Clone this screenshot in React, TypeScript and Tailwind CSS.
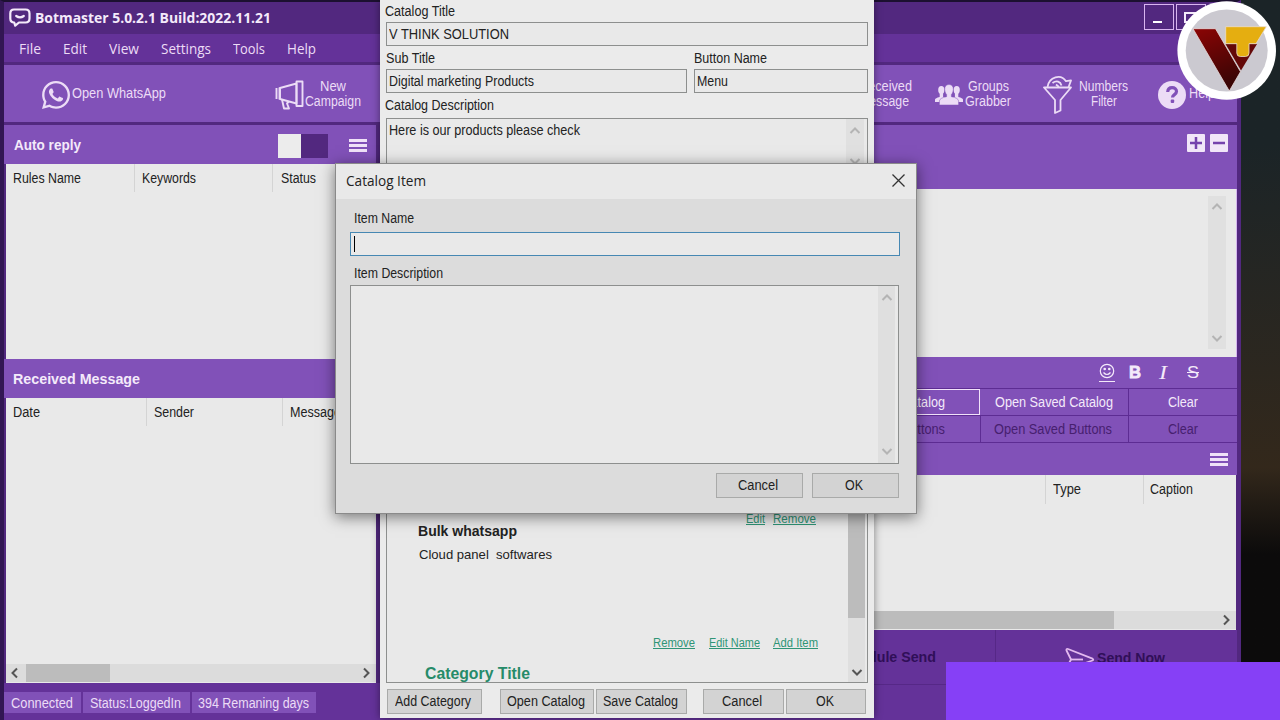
import { useLayoutEffect, useRef, type ReactNode } from "react";
import { FaWhatsapp } from "react-icons/fa";
import clsx from "clsx";

const SANS = "font-['Liberation_Sans',Arial,sans-serif]";
const UI = "font-['Open_Sans','Noto_Sans',sans-serif]";

// Single line label squeezed to an exact width, like the bitmap-ish Windows fonts
function Label({ w, className, children }: { w: number; className?: string; children: ReactNode }) {
  const ref = useRef<HTMLSpanElement>(null);

  useLayoutEffect(() => {
    const el = ref.current;
    if (!el) return;
    el.style.transform = "none";
    el.style.transform = `scaleX(${w / el.getBoundingClientRect().width})`;
  }, [w, children]);

  return (
    <span className={clsx("block shrink-0 whitespace-pre", className)} style={{ width: w }}>
      <span ref={ref} className="inline-block origin-left">
        {children}
      </span>
    </span>
  );
}

function Chevron({ dir, className }: { dir: "up" | "down" | "left" | "right"; className?: string }) {
  const d = {
    up: "M1.5 8 6 3.5 10.5 8",
    down: "M1.5 4 6 8.5 10.5 4",
    left: "M8 1.5 3.5 6 8 10.5",
    right: "M4 1.5 8.5 6 4 10.5",
  }[dir];
  return (
    <svg viewBox="0 0 12 12" className={clsx("size-3 shrink-0", className)} fill="none" stroke="currentColor" strokeWidth={2}>
      <path d={d} />
    </svg>
  );
}

function Burger() {
  return (
    <div className="flex w-[18px] flex-col gap-[2px]">
      <div className="h-[3px] bg-[#f0e2f8]" />
      <div className="h-[3px] bg-[#f0e2f8]" />
      <div className="h-[3px] bg-[#f0e2f8]" />
    </div>
  );
}

function WinButton({ w, label, tw, className }: { w: number; label: string; tw: number; className?: string }) {
  return (
    <button
      className={clsx("flex h-[25px] shrink-0 items-center justify-center border border-[#a9aaa9] bg-[#d3d3d3] pb-px pr-[3px]", className)}
      style={{ width: w }}
    >
      <Label w={tw}>{label}</Label>
    </button>
  );
}

const MENU = [
  { label: "File", w: 22, gap: "ml-[18px]" },
  { label: "Edit", w: 24, gap: "ml-[22px]" },
  { label: "View", w: 30, gap: "ml-[22px]" },
  { label: "Settings", w: 50, gap: "ml-[22px]" },
  { label: "Tools", w: 32, gap: "ml-[22px]" },
  { label: "Help", w: 29, gap: "ml-[22px]" },
];

function TitleBar() {
  return (
    <div className="flex h-8 shrink-0 items-center bg-[#52287f] pl-[5px] text-[#f4eafa]">
      <svg viewBox="0 0 22 20" className="h-5 w-[22px]" fill="none" stroke="currentColor" strokeWidth={2.2} strokeLinejoin="round" strokeLinecap="round">
        <path d="M5 1.5h11.5q4 0 4 4v5q0 4-4 4H10l-3.8 3.2-1-3.2Q1.300 14.200 1.300 10.500v-5q0-4 3.700-4Z" />
        <path d="M7.200 8q3.800 2.700 7.600 0" />
      </svg>
      <Label w={236} className={clsx(UI, "ml-[4px] text-[14px] font-bold")}>
        Botmaster 5.0.2.1 Build:2022.11.21
      </Label>
      <div className="ml-auto flex gap-[2px] self-start pr-[31px] pt-[2px]">
        <div className="flex h-[26px] w-[30px] items-end justify-center border border-[#d9b5f0] pb-[6px] pr-[3px]">
          <div className="h-[2px] w-[9px] bg-white" />
        </div>
        <div className="flex h-[26px] w-[30px] items-center justify-center border border-[#d9b5f0]">
          <div className="h-[11px] w-[14px] border-2 border-[#f4eafa]" />
        </div>
      </div>
    </div>
  );
}

function Megaphone() {
  return (
    <svg viewBox="0 0 29 30" className="h-[30px] w-[29px]" fill="none" stroke="currentColor" strokeWidth={1.900} strokeLinejoin="round">
      <path d="M1.500 8v11M4.500 7.500v12" />
      <path d="M5 8 21.500 3.500v20L5 19Z" />
      <path d="M21.500 1.500h6v24.500h-6Z" />
      <path d="M7 19.500 9 28.500h5l-2-5 1.800-2" />
    </svg>
  );
}

function GroupIcon() {
  return (
    <svg viewBox="0 0 28 22" className="h-[22px] w-[28px]" fill="currentColor">
      <ellipse cx="6.300" cy="6" rx="3.100" ry="4" />
      <ellipse cx="21.700" cy="6" rx="3.100" ry="4" />
      <path d="M4.700 8h3.400v5H11v5H0v-2.500q.3-1.500 4.700-2.500ZM23.300 8h-3.400v5H17v5h11v-2.500q-.3-1.500-4.700-2.500Z" />
      <path stroke="#8151b8" strokeWidth={0.500} d="M14 .5c3 0 4.500 2.300 4.300 5-.2 2.400-1 4-1.900 5v2.200q7 1.300 7.200 4.300v4H4.400v-4q.2-3 7.200-4.300v-2.200c-.9-1-1.700-2.600-1.900-5-.2-2.700 1.300-5 4.300-5Z" />
    </svg>
  );
}

function Funnel() {
  return (
    <svg viewBox="0 0 30 39" className="h-[39px] w-[30px]" fill="none" stroke="currentColor" strokeWidth={1.800} strokeLinejoin="round">
      <path d="M1 12.500h27L17.500 25v10.500L12 38V25Z" />
      <path d="M4.500 12C6 1.500 18-1.500 23 6.200l5-.8-2.500 6.800" />
      <path d="M9.500 8c4-3 8-1.500 9 2.500M13 9.500l3 2.500" />
    </svg>
  );
}

function Toolbar() {
  return (
    <div className="flex h-[57px] shrink-0 items-center bg-[#8151b8] pl-[38px] text-[14px] leading-[15px] text-[#ecdcf6]">
      <FaWhatsapp size={32} className="-ml-[2px] mt-[2px]" />
      <Label w={94} className="ml-0">Open WhatsApp</Label>
      <div className="ml-[109px] mt-[2px]"><Megaphone /></div>
      <div className="ml-px flex w-14 flex-col items-center">
        <Label w={26}>New</Label>
        <Label w={56}>Campaign</Label>
      </div>
      <div className="ml-[489px] flex w-[62px] flex-col items-end">
        <Label w={53}>Received</Label>
        <Label w={50} className="mr-[3px]">Message</Label>
      </div>
      <div className="ml-[23px] mt-[3px]"><GroupIcon /></div>
      <div className="ml-[2px] flex w-[46px] flex-col items-center">
        <Label w={41}>Groups</Label>
        <Label w={46}>Grabber</Label>
      </div>
      <div className="ml-[32px] mt-px"><Funnel /></div>
      <div className="ml-[6px] flex w-[49px] flex-col items-center">
        <Label w={49}>Numbers</Label>
        <Label w={26}>Filter</Label>
      </div>
      <svg viewBox="0 0 28 28" className="ml-[30px] mt-[2px] size-7">
        <circle cx="14" cy="14" r="14" fill="currentColor" />
        <path d="M9.700 11c.2-3 2-4.300 4.400-4.300 2.500 0 4.400 1.400 4.400 3.800 0 3.200-4 3-4 6" fill="none" stroke="#8151b8" strokeWidth={3.200} />
        <rect x="12.700" y="18.500" width="3.500" height="3.500" rx="1" fill="#8151b8" />
      </svg>
      <Label w={26} className="ml-[3px]">Help</Label>
    </div>
  );
}

function LeftColumn() {
  return (
    <div className="flex w-[376px] shrink-0 flex-col">
      <div className="flex h-[39px] w-[372px] shrink-0 items-center bg-[#8151b8] pl-[10px] pr-[9px]">
        <Label w={67} className="text-[14px] font-bold text-[#f4eafa]">Auto reply</Label>
        <div className="ml-auto mt-[2px] flex h-6 w-[50px] bg-[#52287f]">
          <div className="w-[23px] bg-[#ececec]" />
        </div>
        <div className="ml-[21px] mt-[2px]"><Burger /></div>
      </div>
      <div className="ml-[2px] flex h-[195px] w-[370px] bg-[#e9e9e9] text-[#222]">
        <div className="h-[28px] w-[129px] border-r border-[#d4d4d4] pl-[7px] pt-[4px]"><Label w={68}>Rules Name</Label></div>
        <div className="h-[28px] w-[138px] border-r border-[#d4d4d4] pl-[7px] pt-[4px]"><Label w={54}>Keywords</Label></div>
        <div className="pl-[8px] pt-[4px]"><Label w={35}>Status</Label></div>
      </div>
      <div className="flex h-[39px] w-[372px] shrink-0 items-center bg-[#8151b8] pl-[9px]">
        <Label w={127} className="mt-px text-[14px] font-bold text-[#f4eafa]">Received Message</Label>
      </div>
      <div className="ml-[2px] flex h-[285px] w-[370px] flex-col justify-between bg-[#e9e9e9] text-[#222]">
        <div className="flex">
          <div className="h-[28px] w-[141px] border-r border-[#d4d4d4] pl-[7px] pt-[4px]"><Label w={27}>Date</Label></div>
          <div className="h-[28px] w-[136px] border-r border-[#d4d4d4] pl-[7px] pt-[4px]"><Label w={40}>Sender</Label></div>
          <div className="pl-[7px] pt-[4px]"><Label w={51}>Message</Label></div>
        </div>
        <div className="mb-px flex h-[18px] items-center bg-[#dcdcdc] pl-[3px] pr-[4px] text-[#555]">
          <Chevron dir="left" />
          <div className="ml-[5px] h-full w-[84px] bg-[#bcbcbc]" />
          <Chevron dir="right" className="ml-auto" />
        </div>
      </div>
      <div className="flex flex-1 items-start gap-[2px] bg-[#643299] pt-[9px] text-[#ecdcf6]">
        <div className="flex h-[21px] w-[77px] items-center bg-[#8151b8] pl-[7px]"><Label w={62}>Connected</Label></div>
        <div className="flex h-[21px] w-[107px] items-center bg-[#8151b8] pl-[7px]"><Label w={91}>Status:LoggedIn</Label></div>
        <div className="flex h-[21px] w-[124px] items-center bg-[#8151b8] pl-[6px]"><Label w={111}>394 Remaning days</Label></div>
      </div>
    </div>
  );
}

function RightColumn() {
  return (
    <div className="flex w-[857px] shrink-0 flex-col">
      <div className="flex h-[64px] shrink-0 items-start justify-end gap-[5px] bg-[#8151b8] pr-[9px] pt-[9px]">
        <svg viewBox="0 0 18 18" className="size-[18px]"><rect width="18" height="18" rx="1" fill="#f1e6f8" /><path d="M9 3v12M3 9h12" stroke="#7543ad" strokeWidth="2.500" /></svg>
        <svg viewBox="0 0 18 18" className="size-[18px]"><rect width="18" height="18" rx="1" fill="#f1e6f8" /><path d="M3 9h12" stroke="#7543ad" strokeWidth="2.500" /></svg>
      </div>
      <div className="flex h-[168px] justify-end border-r border-[#d5b5ef] bg-[#e9e9e9] pb-[8px] pr-[10px] pt-[7px]">
        <div className="flex w-[18px] flex-col items-center justify-between bg-[#e0e0e0] py-[5px] text-[#b4b4b4]">
          <Chevron dir="up" />
          <Chevron dir="down" />
        </div>
      </div>
      <div className="flex h-[31px] items-center justify-end bg-[#8151b8] pr-[38px] text-[#f4eafa]">
        <div className="border-b border-[#f4eafa] pb-[2px]">
          <svg viewBox="0 0 16 16" className="size-4" fill="none" stroke="currentColor" strokeWidth={1.200}>
            <circle cx="8" cy="8" r="6.700" />
            <path d="M4.500 9.500q3.500 4 7 0" />
            <circle cx="5.700" cy="6" r=".7" fill="currentColor" />
            <circle cx="10.300" cy="6" r=".7" fill="currentColor" />
          </svg>
        </div>
        <Label w={12} className="ml-[14px] text-[17px] font-black [-webkit-text-stroke:0.8px_#f4eafa]">B</Label>
        <Label w={8} className="ml-[18px] font-['Liberation_Serif',serif] text-[19px] italic">I</Label>
        <Label w={12} className="ml-[20px] text-[17px] [&>span]:line-through">S</Label>
      </div>
      <div className="flex flex-col border-y border-[#5d2c93] bg-[#8151b8] text-[#f4eafa]">
        <div className="flex h-[27px] border-b border-[#5d2c93]">
          <div className="flex w-[600px] items-center justify-end border border-[#f1e2fa] pr-[34px]"><Label w={85}>Create Catalog</Label></div>
          <div className="flex w-[149px] items-center justify-center border-r border-[#5d2c93] pr-px"><Label w={118}>Open Saved Catalog</Label></div>
          <div className="flex flex-1 items-center justify-center pr-px"><Label w={30}>Clear</Label></div>
        </div>
        <div className="flex h-[26px] text-[#47206f]">
          <div className="flex w-[601px] items-center justify-end border-r border-[#5d2c93] pr-[35px]"><Label w={85}>Create Buttons</Label></div>
          <div className="flex w-[148px] items-center justify-center border-r border-[#5d2c93] pr-[3px]"><Label w={118}>Open Saved Buttons</Label></div>
          <div className="flex flex-1 items-center justify-center pr-px"><Label w={30}>Clear</Label></div>
        </div>
      </div>
      <div className="flex h-[32px] items-center justify-end bg-[#8151b8] pr-[9px]"><Burger /></div>
      <div className="flex h-[155px] w-[856px] flex-col justify-between bg-[#e9e9e9] text-[#222]">
        <div className="flex justify-end">
          <div className="h-[29px] w-[98px] border-l border-[#d4d4d4] pl-[7px] pt-[4px]"><Label w={28}>Type</Label></div>
          <div className="h-[29px] w-[93px] border-l border-[#d4d4d4] pl-[6px] pt-[4px]"><Label w={43}>Caption</Label></div>
        </div>
        <div className="mb-px flex h-[18px] items-center bg-[#dcdcdc] pr-[4px] text-[#555]">
          <div className="h-full w-[734px] bg-[#bcbcbc]" />
          <Chevron dir="right" className="ml-auto" />
        </div>
      </div>
      <div className="flex h-[55px] bg-[#643299] text-[14px] font-bold text-[#300f58]">
        <div className="flex w-[616px] items-center justify-end border-b border-r border-[#562887] pr-[59px]"><Label w={102}>Schedule Send</Label></div>
        <div className="flex flex-1 items-center border-b border-[#562887] pl-[69px]">
          <svg viewBox="0 0 30 24" className="mt-[4px] h-6 w-[30px]" fill="none" stroke="#e3b9ef" strokeWidth={1.800} strokeLinejoin="round">
            <path d="M3 2q-2-.5-1.500 1.500L6 12.500l-4 7.500q-.5 2.500 2 1.700L27.500 13.500q1.500-1 0-1.800Z" />
            <path d="M6 12.500h12" />
          </svg>
          <Label w={68} className="ml-[2px] mt-px">Send Now</Label>
        </div>
      </div>
      <div className="flex-1 bg-[#643299]" />
    </div>
  );
}

function MainWindow() {
  return (
    <div className="flex h-[720px] w-[1241px] shrink-0 flex-col border-l-4 border-r-4 border-t-2 border-l-[#321653] border-r-[#52287f] border-t-[#1c1030] bg-[#52287f]">
      <TitleBar />
      <div className={clsx(UI, "flex h-7 shrink-0 items-center bg-[#643299] pt-px text-[14px] text-[#ecdcf6]")}>
        {MENU.map(({ label, w, gap }) => (
          <Label key={label} w={w} className={clsx(gap, "first:ml-[15px]")}>{label}</Label>
        ))}
      </div>
      <div className="h-[3px] shrink-0" />
      <Toolbar />
      <div className="h-[3px] shrink-0" />
      <div className="flex flex-1">
        <LeftColumn />
        <RightColumn />
      </div>
    </div>
  );
}

function Field({ w, tw, value }: { w: number; tw: number; value: string }) {
  return (
    <div className="flex h-6 items-center border border-[#8d8f8e] bg-[#e9e9e9] pb-px pl-[2px]" style={{ width: w }}>
      <Label w={tw}>{value}</Label>
    </div>
  );
}

function CatalogWindow() {
  const link = "text-[12px] text-[#2f9576] [&>span]:underline";
  return (
    <div className="absolute left-[380px] top-0 flex h-[718px] w-[494px] flex-col bg-[#ebebeb] px-[6px] text-[#222] shadow-[0_0_8px_rgba(0,0,0,0.45)]">
      <div className="flex h-[22px] items-center"><Label w={70} className="-ml-px">Catalog Title</Label></div>
      <Field w={482} tw={120} value="V THINK SOLUTION" />
      <div className="flex gap-[7px]">
        <div>
          <div className="flex h-[23px] items-center"><Label w={49}>Sub Title</Label></div>
          <Field w={301} tw={145} value="Digital marketing Products" />
        </div>
        <div>
          <div className="flex h-[23px] items-center"><Label w={73}>Button Name</Label></div>
          <Field w={174} tw={31} value="Menu" />
        </div>
      </div>
      <div className="flex h-[25px] items-center pb-px"><Label w={109} className="-ml-px">Catalog Description</Label></div>
      <div className="flex h-[60px] w-[482px] justify-between border border-[#8d8f8e] bg-[#e9e9e9]">
        <Label w={191} className="pl-[2px] pt-px">Here is our products please check</Label>
        <div className="mr-[3px] flex w-[18px] flex-col items-center gap-[18px] bg-[#e0e0e0] pt-[6px] text-[#b4b4b4]">
          <Chevron dir="up" />
          <Chevron dir="down" />
        </div>
      </div>
      <div className="mt-[22px] flex h-[483px] w-[482px] overflow-hidden border border-[#8d8f8e] bg-[#e9e9e9]">
        <div className="flex flex-1 flex-col justify-end">
          <div className="flex h-4 items-center justify-end gap-[8px] pr-[32px] pt-[4px]">
            <Label w={19} className={link}>Edit</Label>
            <Label w={43} className={link}>Remove</Label>
          </div>
          <Label w={99} className="-mt-[4px] ml-[31px] text-[15px] font-bold leading-[20px]">Bulk whatsapp</Label>
          <Label w={133} className="ml-[32px] mt-[4px] text-[13px] leading-[20px]">Cloud panel  softwares</Label>
          <div className="mt-[69px] flex h-[17px] items-center justify-end pr-[30px]">
            <Label w={42} className={link}>Remove</Label>
            <Label w={51} className={clsx(link, "ml-[14px]")}>Edit Name</Label>
            <Label w={45} className={clsx(link, "ml-[13px]")}>Add Item</Label>
          </div>
          <Label w={105} className="ml-[38px] mt-[12px] h-[19px] text-[16px] font-bold leading-[22px] text-[#268b69]">Category Title</Label>
        </div>
        <div className="mr-[2px] flex w-[17px] flex-col items-center justify-between bg-[#dfdfdf] pb-[4px] text-[#555]">
          <div className="h-[417px] w-full bg-[#bcbcbc]" />
          <Chevron dir="down" />
        </div>
      </div>
      <div className="mt-[6px] flex pl-px">
        <WinButton w={95} tw={76} label="Add Category" />
        <WinButton w={94} tw={78} label="Open Catalog" className="ml-[18px]" />
        <WinButton w={91} tw={75} label="Save Catalog" className="ml-[2px]" />
        <WinButton w={81} tw={40} label="Cancel" className="ml-[16px]" />
        <WinButton w={80} tw={18} label="OK" className="ml-[2px]" />
      </div>
    </div>
  );
}

function ItemDialog() {
  return (
    <div className="absolute left-[335px] top-[163px] flex h-[351px] w-[582px] flex-col border border-[#8a8a8a] bg-[#dcdcdc] text-[#222] shadow-[0_3px_14px_rgba(0,0,0,0.5)]">
      <div className="flex h-[35px] shrink-0 items-center justify-between bg-[#e9e9e9] pb-[2px] pl-[10px] pr-[11px]">
        <Label w={80} className={UI}>Catalog Item</Label>
        <svg viewBox="0 0 13 13" className="size-[13px]" stroke="#333" strokeWidth={1.300}>
          <path d="M.5.500 12.500 12.500M12.500.500.500 12.500" />
        </svg>
      </div>
      <div className="flex h-[33px] items-center pl-[18px] pt-[4px]"><Label w={60}>Item Name</Label></div>
      <div className="ml-[14px] flex h-[24px] w-[550px] items-center border border-[#4688b3] bg-[#e9e9e9] pl-[3px]">
        <div className="h-[16px] w-px bg-black" />
      </div>
      <div className="flex h-[29px] items-center pl-[18px] pt-[5px]"><Label w={89}>Item Description</Label></div>
      <div className="ml-[14px] flex h-[179px] w-[549px] justify-end border border-[#8d8f8e] bg-[#e9e9e9]">
        <div className="mr-[3px] flex w-[17px] flex-col items-center justify-between bg-[#dfdfdf] py-[6px] text-[#b4b4b4]">
          <Chevron dir="up" />
          <Chevron dir="down" />
        </div>
      </div>
      <div className="mt-[9px] flex justify-end gap-[9px] pr-[17px]">
        <WinButton w={87} tw={40} label="Cancel" />
        <WinButton w={87} tw={18} label="OK" />
      </div>
    </div>
  );
}

function Logo() {
  return (
    <svg viewBox="0 0 100 100" className="absolute left-[1177px] top-0 size-[100px]">
      <defs>
        <linearGradient id="vred" x1="0" y1="0" x2="0.300" y2="1">
          <stop offset="0" stopColor="#8c0505" />
          <stop offset="1" stopColor="#3a0505" />
        </linearGradient>
      </defs>
      <circle cx="49.700" cy="50.500" r="49.300" fill="#fff" />
      <circle cx="49.700" cy="50.500" r="41" fill="#cbc9d0" />
      <path d="M48.500 44H80L64 70.500Z" fill="#640808" />
      <path d="M16 28.700h22.500L63.500 71.700 52.300 91Z" fill="url(#vred)" stroke="#e8dcdc" strokeWidth=".8" />
      <path d="M48.700 26.700H89.300L79 43.700h-7V53q0 3.500-3.500 3.500h-5.200q-3.500 0-3.500-3.500v-9.300H48.700Z" fill="#e5ae10" stroke="#eadccb" strokeWidth=".8" />
    </svg>
  );
}

export default function App() {
  return (
    <div className={clsx(SANS, "relative h-[720px] w-[1280px] overflow-hidden bg-linear-to-b from-[#1b2427] from-20% via-[#33281b] via-65% to-[#0c0b0b] to-77% text-[14px] leading-[20px]")}>
      <MainWindow />
      <CatalogWindow />
      <ItemDialog />
      <Logo />
      <div className="absolute bottom-0 right-0 h-[58px] w-[334px] bg-[#8640f6]" />
    </div>
  );
}
